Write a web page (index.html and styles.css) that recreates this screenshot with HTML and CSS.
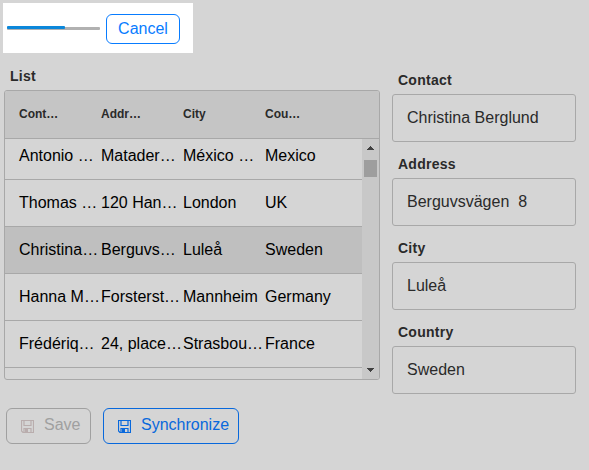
FILE: index.html
```html
<!DOCTYPE html>
<html lang="en">
<head>
<meta charset="utf-8">
<title>Contacts</title>
<link rel="stylesheet" href="styles.css">
</head>
<body>
<div class="sync-bar">
  <div class="progress"><div class="progress-value"></div></div>
  <button class="btn btn-cancel">Cancel</button>
</div>
<main class="main">
  <section class="list">
    <h2 class="label">List</h2>
    <div class="table">
      <div class="row head"><span>Cont…</span><span>Addr…</span><span>City</span><span>Cou…</span></div>
      <div class="body">
        <div class="rows">
          <div class="row"><span>Antonio …</span><span>Matader…</span><span>México …</span><span>Mexico</span></div>
          <div class="row"><span>Thomas …</span><span>120 Han…</span><span>London</span><span>UK</span></div>
          <div class="row selected"><span>Christina…</span><span>Berguvs…</span><span>Luleå</span><span>Sweden</span></div>
          <div class="row"><span>Hanna M…</span><span>Forsterst…</span><span>Mannheim</span><span>Germany</span></div>
          <div class="row"><span>Frédériq…</span><span>24, place…</span><span>Strasbou…</span><span>France</span></div>
        </div>
        <div class="scrollbar">
          <svg class="arrow" width="17" height="17" shape-rendering="crispEdges"><path d="M8 7h1v1h1v1h1v1h1v1H5v-1h1V9h1V8h1z"/></svg>
          <div class="thumb"></div>
          <svg class="arrow arrow-down" width="17" height="17" shape-rendering="crispEdges"><path d="M5 6h7v1h-1v1h-1v1H9v1H8V9H7V8H6V7H5z"/></svg>
        </div>
      </div>
    </div>
  </section>
  <section class="form">
    <h2 class="label">Contact</h2><div class="field">Christina Berglund</div>
    <h2 class="label">Address</h2><div class="field">Berguvsvägen&nbsp; 8</div>
    <h2 class="label">City</h2><div class="field">Luleå</div>
    <h2 class="label">Country</h2><div class="field">Sweden</div>
  </section>
</main>
<footer class="actions">
  <button class="btn btn-save" disabled><svg class="disk" width="13" height="13" viewBox="0 0 13 13"><path class="outline" d="M1 .5h11.5v12H2L.5 11V.5zM3 1v4.5h7V1M3 12V8.5h7V12"/><path d="M4 9h3v3H4z"/></svg>Save</button>
  <button class="btn btn-sync"><svg class="disk" width="13" height="13" viewBox="0 0 13 13"><path class="outline" d="M1 .5h11.5v12H2L.5 11V.5zM3 1v4.5h7V1M3 12V8.5h7V12"/><path d="M4 9h3v3H4z"/></svg>Synchronize</button>
</footer>
</body>
</html>
```
FILE: styles.css
```css
* { box-sizing: border-box; }
body {
  margin: 0;
  padding: 3px;
  height: 470px;
  overflow: hidden;
  background: #d5d5d5;
  color: #000;
  font: 16px/20px "Liberation Sans", Arial, sans-serif;
}
.sync-bar {
  display: flex;
  align-items: flex-start;
  gap: 6px;
  width: 190px;
  height: 50px;
  padding: 11px 0 0 4px;
  background: #fff;
}
.progress {
  width: 93px;
  height: 3px;
  margin-top: 13px;
  border-radius: 1px;
  background: #b1b1b1;
}
.progress-value {
  width: 58px;
  height: 3px;
  border-radius: 1px;
  background: #0b87da;
  transform: translateY(-1px);
}
.btn {
  display: flex;
  align-items: center;
  margin: 0;
  padding: 0 0 2px;
  border: 1px solid;
  border-radius: 6px;
  background: none;
  font: inherit;
}
.btn-cancel {
  width: 74px;
  height: 30px;
  padding: 0;
  justify-content: center;
  color: #087cff;
}
.main {
  display: flex;
  gap: 12px;
  padding: 13px 0 0 1px;
}
.label {
  margin: 0 0 4px 6px;
  color: #2a2a2a;
  font-size: 14px;
  line-height: 20px;
  letter-spacing: .25px;
}
.list { width: 376px; }
.table {
  height: 290px;
  overflow: hidden;
  border: 1px solid #a8a8a8;
  border-radius: 3px;
}
.row {
  display: grid;
  grid-template-columns: repeat(4, 82px);
  align-items: center;
  flex: none;
  height: 47px;
  padding: 0 0 0 14px;
  border-bottom: 1px solid #a8a8a8;
  white-space: nowrap;
}
.head {
  height: 48px;
  padding-bottom: 2px;
  color: #2a2a2a;
  background: #c5c5c5;
  font-size: 12px;
  font-weight: bold;
}
.body {
  display: flex;
  height: 240px;
}
.rows {
  display: flex;
  flex-direction: column;
  justify-content: flex-start;
  width: 357px;
  margin-top: -6px;
}
.selected { background: #bfbfbf; }
.scrollbar {
  display: flex;
  flex-direction: column;
  width: 17px;
  background: #c8c8c8;
}
.arrow {
  display: block;
  flex: none;
  fill: #404040;
}
.arrow-down { margin-top: auto; }
.thumb {
  width: 13px;
  height: 17px;
  margin: 4px 2px 0;
  background: #9e9e9e;
}
.form {
  width: 184px;
  padding-top: 4px;
}
.field {
  height: 48px;
  margin-bottom: 12px;
  padding: 13px 14px;
  border: 1px solid #a8a8a8;
  border-radius: 3px;
  color: #2a2a2a;
}
.actions {
  display: flex;
  gap: 12px;
  padding: 2px 0 0 3px;
}
.btn-save, .btn-sync {
  height: 36px;
  padding-left: 14px;
}
.btn-save {
  width: 85px;
  color: #a0a0a0;
}
.btn-sync {
  width: 136px;
  color: #0868dc;
}
.disk {
  margin: 3px 10px 0 0;
  fill: currentColor;
}
.btn-save .disk { color: #b9adad; }
.outline {
  fill: none;
  stroke: currentColor;
  stroke-width: 1.2;
}
```
